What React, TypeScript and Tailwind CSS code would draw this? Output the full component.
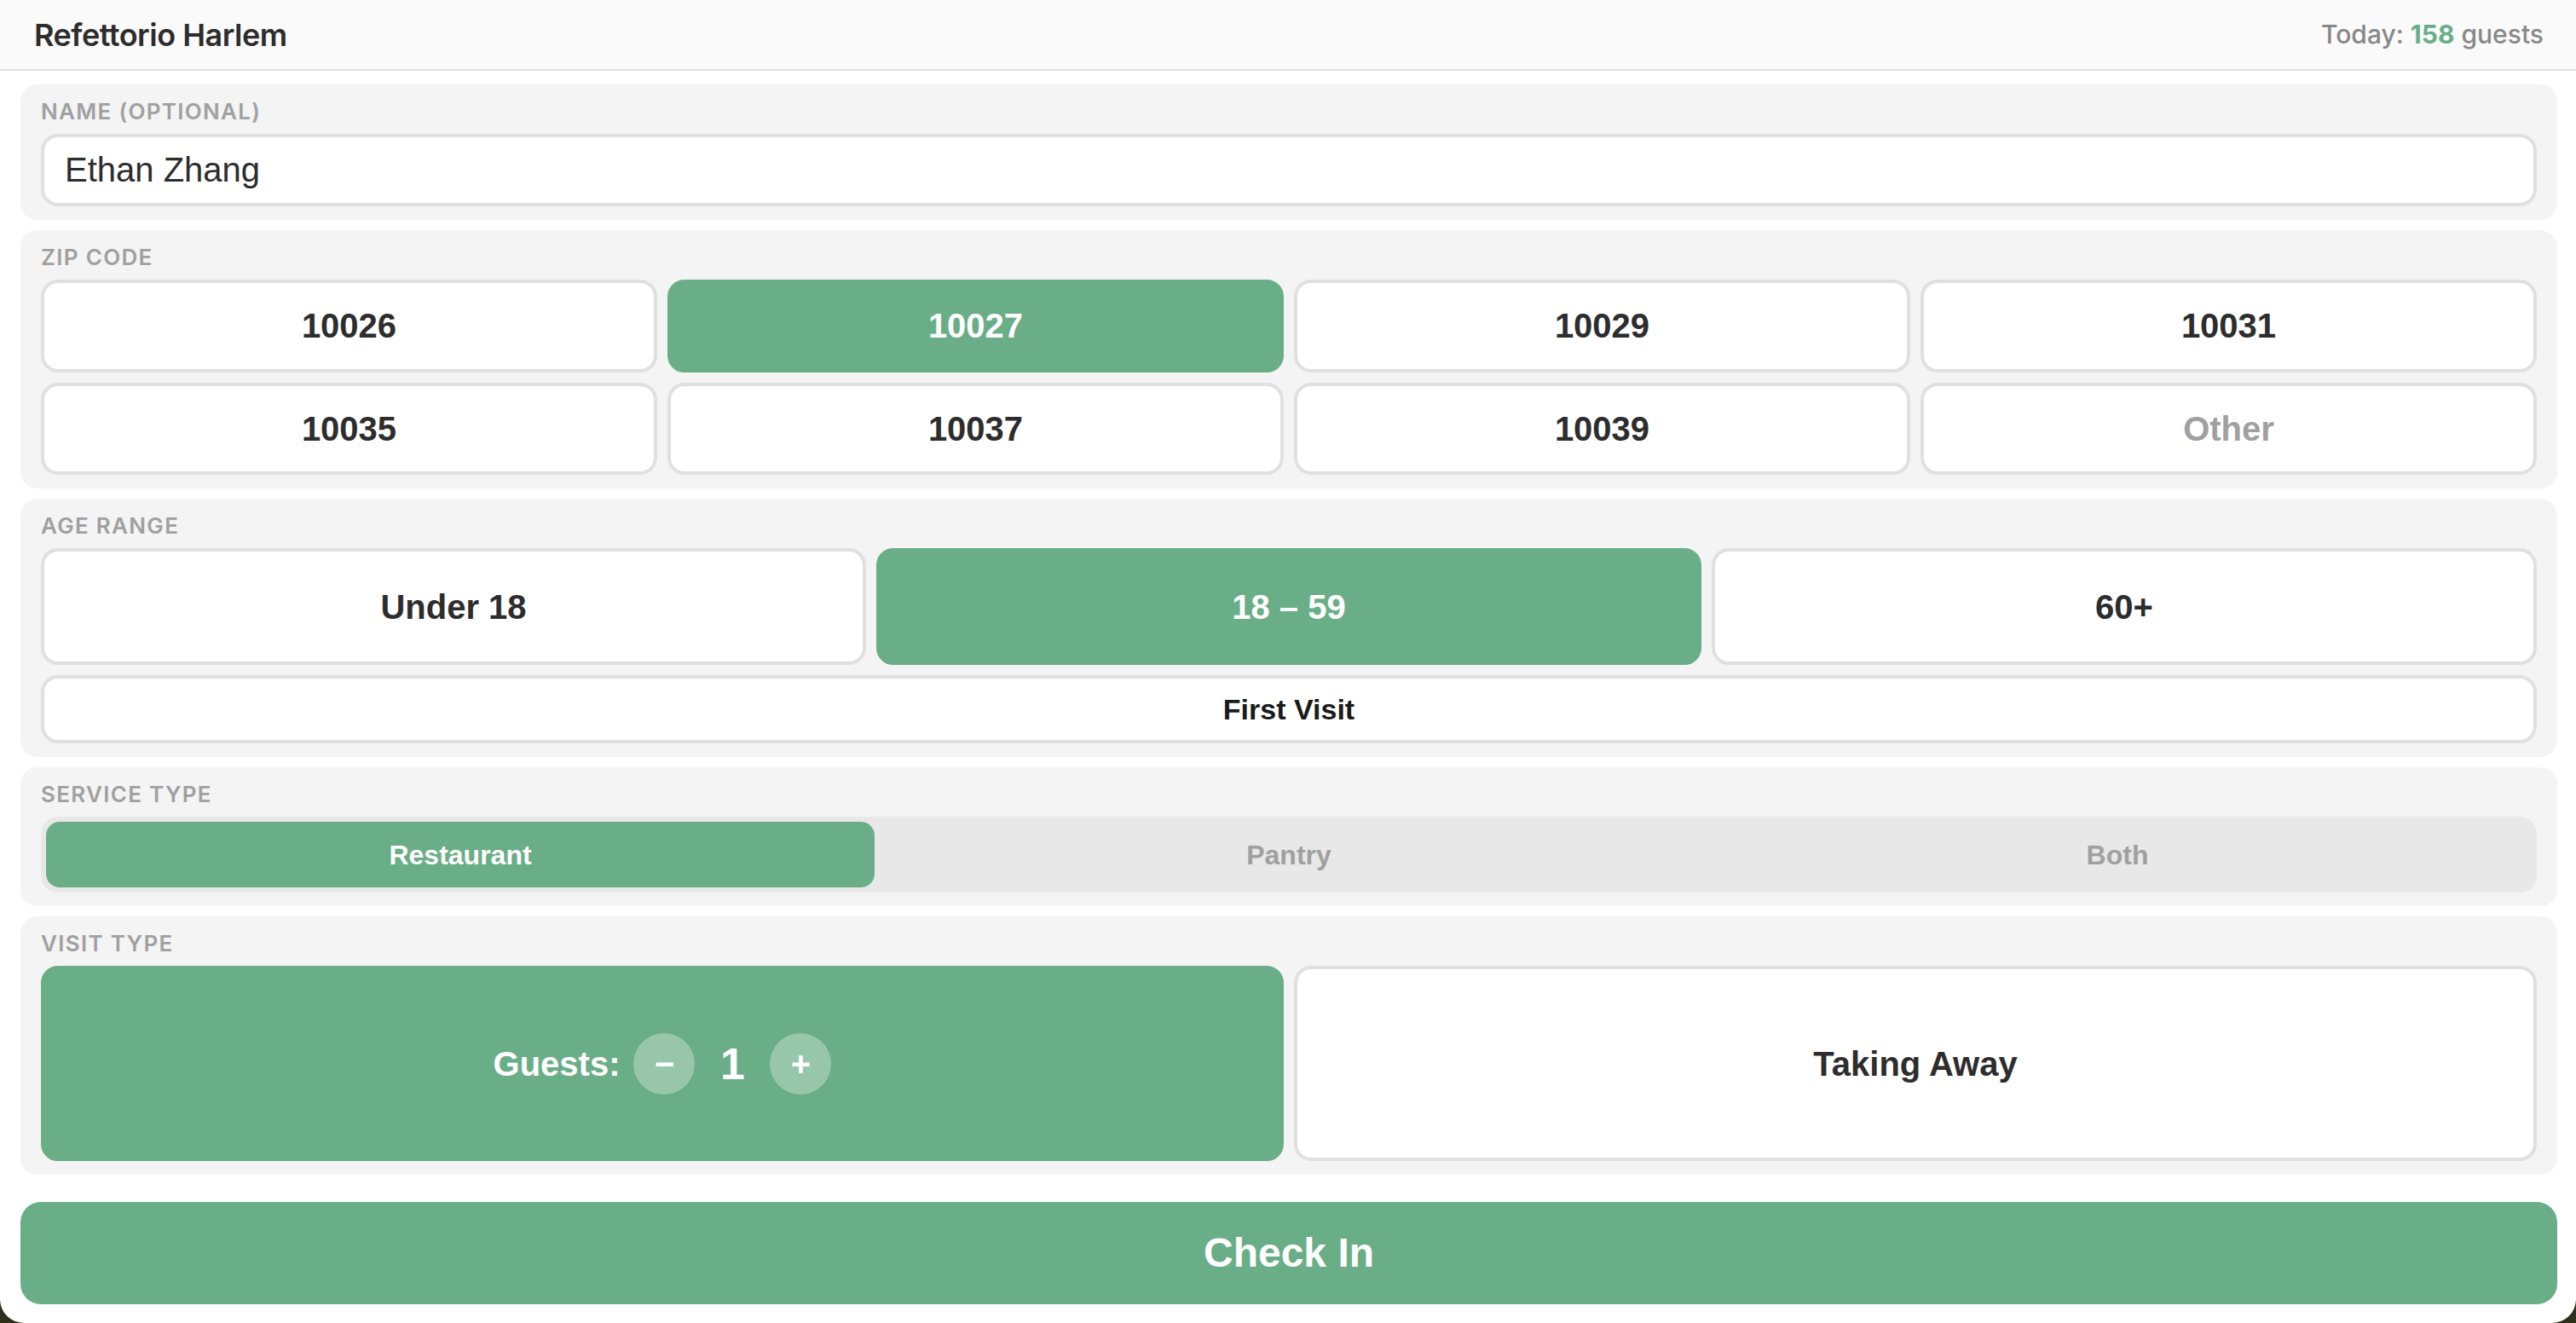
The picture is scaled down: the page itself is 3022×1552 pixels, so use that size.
import React from "react";

const GREEN = "bg-[#6aae87]";

const zips = ["10026", "10027", "10029", "10031", "10035", "10037", "10039", "Other"];

const Section: React.FC<{ label: string; children: React.ReactNode }> = ({ label, children }) => (
  <section className="rounded-[20px] bg-[#f4f4f4] px-[24px] pt-[16px] pb-[16px]">
    <div className="mb-[10px] h-[32px] font-['Inter',sans-serif] text-[26px] leading-[32px] font-semibold tracking-[1.3px] text-[#a0a0a0] uppercase">
      {label}
    </div>
    {children}
  </section>
);

const Choice: React.FC<{ active?: boolean; muted?: boolean; className?: string; children: React.ReactNode }> = ({
  active,
  muted,
  className,
  children,
}) => (
  <button
    className={
      "flex items-center justify-center rounded-[20px] border-[4px] font-bold " +
      (active
        ? "border-[#6aae87] bg-[#6aae87] text-white "
        : muted
          ? "border-[#e0e0e0] bg-white text-[#a0a0a0] "
          : "border-[#e0e0e0] bg-white text-[#2d2d2d] ") +
      (className ?? "")
    }
  >
    {children}
  </button>
);

const Stepper: React.FC<{ sign: string }> = ({ sign }) => (
  <span className="flex h-[72px] w-[72px] items-center justify-center rounded-full bg-white/30 text-[40px] leading-none font-bold text-white">
    {sign}
  </span>
);

export default function App() {
  return (
    <div className="h-[1552px] w-full overflow-hidden bg-[#2e2e1a] font-['Liberation_Sans',sans-serif]">
      <div className="flex h-full flex-col rounded-b-[28px] bg-white">
        <header className="flex h-[83px] items-center justify-between border-b-2 border-[#e0e0e0] bg-[#fafafa] pr-[38px] pl-[40px] font-['Inter',sans-serif]">
          <h1 className="text-[36px] font-semibold tracking-[-0.5px] text-[#2d2d2d]">Refettorio Harlem</h1>
          <div className="text-[30px] font-medium text-[#888888]">
            Today: <span className="font-bold text-[#6aae87]">158</span> guests
          </div>
        </header>

        <main className="flex flex-col gap-[12px] pt-[16px] pr-[22px] pl-[24px]">
          <Section label="Name (optional)">
            <input
              readOnly
              value="Ethan Zhang"
              className="h-[85px] w-full rounded-[20px] border-[4px] border-[#e0e0e0] bg-white px-[24px] text-[40px] text-[#2d2d2d] outline-none"
            />
          </Section>

          <Section label="Zip code">
            <div className="grid grid-cols-4 gap-[12px]">
              {zips.map((zip) => (
                <Choice
                  key={zip}
                  active={zip === "10027"}
                  muted={zip === "Other"}
                  className="h-[108.5px] text-[40px]"
                >
                  {zip}
                </Choice>
              ))}
            </div>
          </Section>

          <Section label="Age range">
            <div className="grid grid-cols-3 gap-[12px]">
              <Choice className="h-[137px] text-[40px]">Under 18</Choice>
              <Choice active className="h-[137px] text-[40px]">
                18 – 59
              </Choice>
              <Choice className="h-[137px] text-[40px]">60+</Choice>
            </div>
            <Choice className="mt-[12px] h-[80px] w-full text-[34px] !text-[#1a1a1a]">First Visit</Choice>
          </Section>

          <Section label="Service type">
            <div className="grid h-[89px] grid-cols-3 rounded-[20px] bg-[#e8e8e8] p-[6px] text-[32px] font-bold">
              <div className={"flex items-center justify-center rounded-[16px] text-white " + GREEN}>Restaurant</div>
              <div className="flex items-center justify-center text-[#a0a0a0]">Pantry</div>
              <div className="flex items-center justify-center text-[#a0a0a0]">Both</div>
            </div>
          </Section>

          <Section label="Visit type">
            <div className="grid grid-cols-2 gap-[12px]">
              <Choice active className="h-[229px] text-[40px]">
                <span className="flex items-center gap-[16px]">
                  Guests:
                  <Stepper sign="−" />
                  <span className="w-[56px] text-center text-[52px]">1</span>
                  <Stepper sign="+" />
                </span>
              </Choice>
              <Choice className="h-[229px] text-[40px]">Taking Away</Choice>
            </div>
          </Section>

          <button className={"mt-[20px] h-[120px] rounded-[24px] text-[48px] font-bold text-white " + GREEN}>
            Check In
          </button>
        </main>
      </div>
    </div>
  );
}
